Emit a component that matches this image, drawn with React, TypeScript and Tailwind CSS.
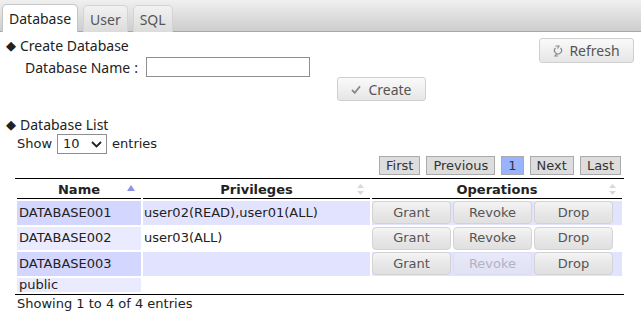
import { useState } from "react";

const rows = [
  { name: "DATABASE001", privileges: "user02(READ),user01(ALL)", ops: true, revoke: true },
  { name: "DATABASE002", privileges: "user03(ALL)", ops: true, revoke: true },
  { name: "DATABASE003", privileges: "", ops: true, revoke: false },
  { name: "public", privileges: "", ops: false, revoke: false },
];

const SortBoth = () => (
  <svg width="7" height="11" viewBox="0 0 7 11" className="block">
    <path d="M3.5 0 L7 4 L0 4 Z" fill="#d8d8d8" />
    <path d="M0 7 L7 7 L3.5 11 Z" fill="#d8d8d8" />
  </svg>
);

const SortAsc = () => (
  <svg width="8" height="6" viewBox="0 0 8 6" className="block">
    <path d="M4 0 L8 6 L0 6 Z" fill="#8a93e6" />
  </svg>
);

const OpButton = ({ label, disabled }: { label: string; disabled?: boolean }) => (
  <button
    className={
      "w-[79px] h-[23px] rounded-[4px] border border-[#d3d3d3] bg-gradient-to-b from-[#f4f4f4] via-[#e8e8e8] to-[#e0e0e0] text-[13px] leading-[16px] text-[#555] " +
      (disabled ? "opacity-35" : "")
    }
  >
    {label}
  </button>
);

const App = () => {
  const [tab, setTab] = useState("Database");
  const [name, setName] = useState("");

  return (
    <div className="w-[641px] h-[322px] bg-white text-[#222] font-['DejaVu_Sans',sans-serif] overflow-hidden">
      {/* tabs */}
      <div className="h-[32px] flex items-end gap-[5px] pl-[2px] bg-gradient-to-b from-[#f0f0f0] to-[#cdcdcd] border-b border-[#a8a8a8]">
        {["Database", "User", "SQL"].map((t) => (
          <div
            key={t}
            onClick={() => setTab(t)}
            className={
              "-mb-px px-[6px] flex items-center rounded-t-[5px] border border-b-0 text-[14px] font-['Noto_Sans',sans-serif] cursor-pointer " +
              (tab === t
                ? "h-[28px] bg-white border-[#c5c5c5] text-[#222]"
                : "h-[27px] bg-gradient-to-b from-[#f2f2f2] to-[#dcdcdc] border-[#d3d3d3] text-[#555]")
            }
          >
            {t}
          </div>
        ))}
      </div>

      <div className="pl-[6px] pr-[7px]">
        <div className="flex justify-between pt-[4px]">
          <div className="font-['Noto_Sans',sans-serif] text-[14px] text-[#222]">
            <div className="h-[18px] flex items-center gap-[4px]">
              <span className="text-[13px] leading-none">◆</span>
              <span>Create Database</span>
            </div>
            <div className="flex items-center mt-[3px] pl-[19px] h-[20px]">
              <span>Database Name</span>
              <span className="ml-[4px] mr-[8px]">:</span>
              <input
                value={name}
                onChange={(e) => setName(e.target.value)}
                className="w-[164px] h-[20px] border border-[#8f8f8f] bg-white outline-none px-1 text-[13px]"
              />
            </div>
          </div>
          <button className="mt-[2px] w-[95px] h-[25px] flex items-center justify-center gap-[6px] rounded-[3px] border border-[#cfcfcf] bg-gradient-to-b from-[#fafafa] to-[#e6e6e6] text-[14px] text-[#555] font-['Noto_Sans',sans-serif]">
            <svg width="10" height="12" viewBox="0 0 10 12">
              <path d="M7.5 3 A3.5 3.5 0 1 1 2.5 3" fill="none" stroke="#888" strokeWidth="1.2" />
              <path d="M2.5 1 L6 1 L4.5 3.5" fill="none" stroke="#888" strokeWidth="1.1" />
              <path d="M5 11 L2 11 L3.5 8.8" fill="none" stroke="#888" strokeWidth="1.1" />
            </svg>
            Refresh
          </button>
        </div>

        <div className="pl-[331px]">
          <button className="w-[89px] h-[24px] flex items-center justify-center gap-[7px] rounded-[3px] border border-[#cfcfcf] bg-gradient-to-b from-[#fafafa] to-[#e6e6e6] text-[14px] text-[#555] font-['Noto_Sans',sans-serif]">
            <svg width="10" height="9" viewBox="0 0 10 9">
              <path d="M1 5 L3.8 7.8 L9 1.2" fill="none" stroke="#888" strokeWidth="1.8" />
            </svg>
            Create
          </button>
        </div>

        <div className="mt-[14px] h-[18px] flex items-center gap-[4px] font-['Noto_Sans',sans-serif] text-[14px]">
          <span className="text-[13px] leading-none">◆</span>
          <span>Database List</span>
        </div>

        <div className="flex items-center mt-[1px] pl-[11px] text-[13px] leading-[16px] h-[20px]">
          <span>Show</span>
          <div className="ml-[5px] mr-[5px] w-[50px] h-[20px] border border-[#8f8f8f] flex items-center justify-between pl-[5px] pr-[4px]">
            <span>10</span>
            <svg width="11" height="7" viewBox="0 0 11 7">
              <path d="M1 1 L5.5 5.5 L10 1" fill="none" stroke="#222" strokeWidth="1.8" />
            </svg>
          </div>
          <span>entries</span>
        </div>

        <div className="flex justify-end mt-[2px] pr-[10px] text-[13px] leading-[16px] text-[#333]">
          {["First", "Previous", "1", "Next", "Last"].map((p) => (
            <span
              key={p}
              className={
                "mx-[3px] h-[19px] px-[6px] flex items-center border border-[#aaa] " +
                (p === "1" ? "bg-[#99b3ff]" : "bg-[#ddd]")
              }
            >
              {p}
            </span>
          ))}
        </div>

        <table className="mt-[3px] ml-[9px] w-[609px] border-separate border-spacing-[2px] border-y border-black text-[13px] leading-[16px] table-fixed">
          <thead>
            <tr>
              <th className="w-[124px] h-[18px] p-0 border-b border-black font-bold relative">
                Name
                <span className="absolute right-[6px] top-[4px]">
                  <SortAsc />
                </span>
              </th>
              <th className="w-[227px] p-0 border-b border-black font-bold relative">
                Privileges
                <span className="absolute right-[6px] top-[3px]">
                  <SortBoth />
                </span>
              </th>
              <th className="p-0 border-b border-black font-bold relative">
                Operations
                <span className="absolute right-[6px] top-[3px]">
                  <SortBoth />
                </span>
              </th>
            </tr>
          </thead>
          <tbody>
            {rows.map((r, i) => {
              const odd = i % 2 === 0;
              return (
                <tr key={r.name}>
                  <td className={"px-[2px] py-0 " + (r.ops ? "h-[23.5px] " : "h-[14px] leading-[14px] ") + (odd ? "bg-[#d3d6ff]" : "bg-[#eaebff]")}>
                    {r.name}
                  </td>
                  <td className={"px-[1px] py-0 " + (odd ? "bg-[#e2e4ff]" : "bg-white")}>{r.privileges}</td>
                  <td className={"p-0 " + (odd ? "bg-[#e2e4ff]" : "bg-white")}>
                    {r.ops && (
                      <div className="flex gap-[2px]">
                        <OpButton label="Grant" />
                        <OpButton label="Revoke" disabled={!r.revoke} />
                        <OpButton label="Drop" />
                      </div>
                    )}
                  </td>
                </tr>
              );
            })}
          </tbody>
        </table>

        <div className="pl-[11px] mt-[1px] text-[13px] leading-[16px]">Showing 1 to 4 of 4 entries</div>
      </div>
    </div>
  );
};

export default App;
